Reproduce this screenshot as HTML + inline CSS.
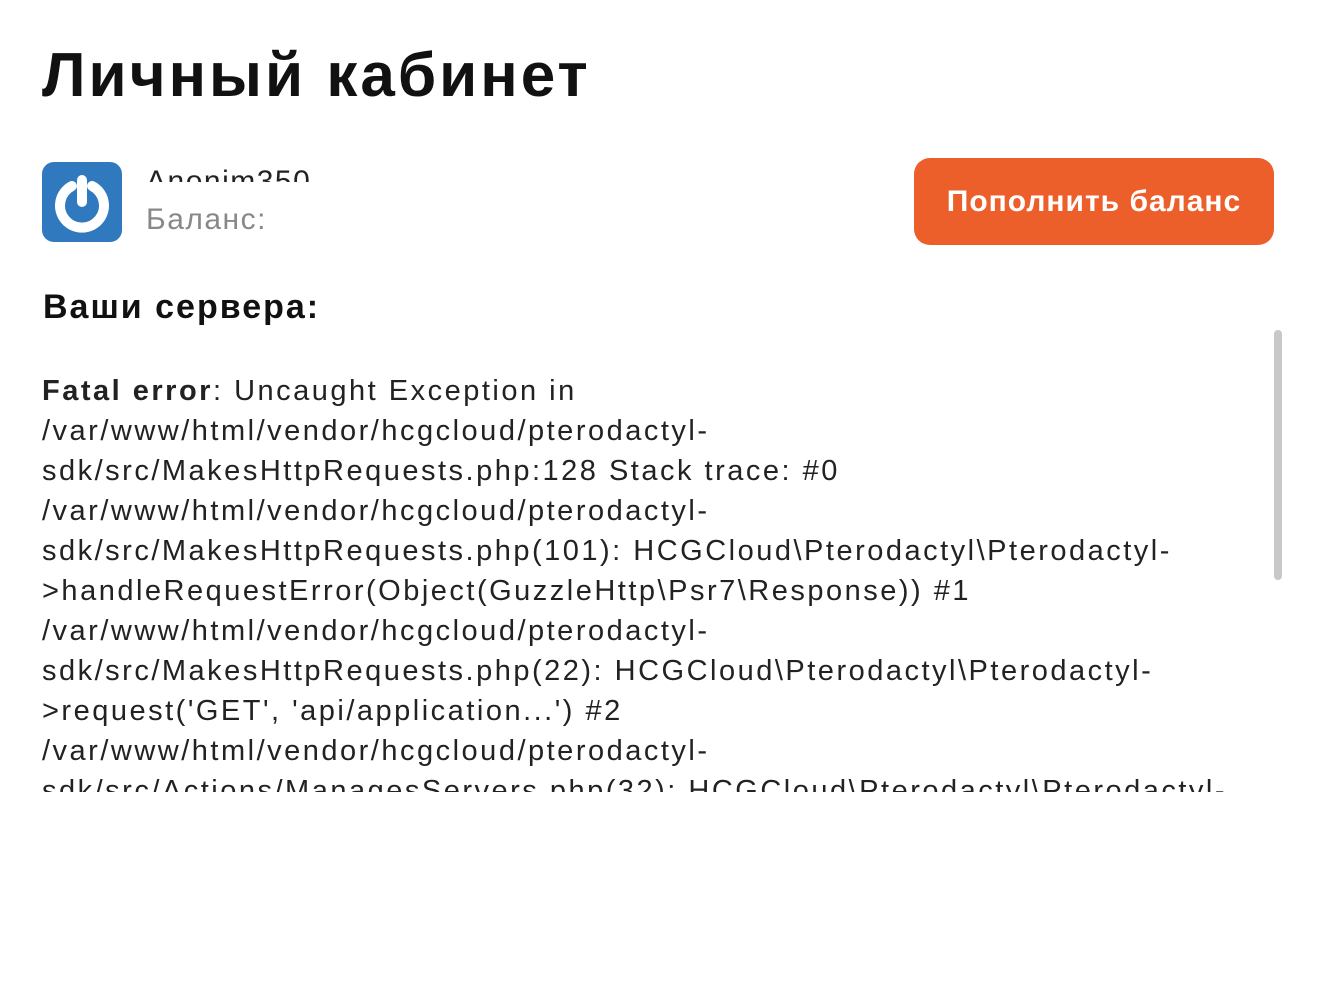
<!DOCTYPE html>
<html><head><meta charset="utf-8"><style>
body{margin:0;width:1322px;height:988px;background:#fff;font-family:"Liberation Sans",sans-serif;color:#111;position:relative;overflow:hidden}
h1{position:absolute;left:42px;top:40px;margin:0;font-size:62px;font-weight:bold;letter-spacing:3px}
.av{position:absolute;left:42px;top:162px;width:80px;height:80px;background:#3079bf;border-radius:12px}
.name{position:absolute;left:146px;top:160px;font-size:30px;color:#222;height:22px;overflow:hidden;line-height:44px;letter-spacing:1.5px}
.bal{position:absolute;left:146px;top:203px;font-size:30px;color:#888;letter-spacing:1.5px}
.btn{position:absolute;left:914px;top:158px;width:360px;height:87px;background:#ec5f2b;border-radius:16px;color:#fff;font-weight:bold;font-size:30px;text-align:center;line-height:87px;letter-spacing:1px}
h2{position:absolute;left:43px;top:288px;margin:0;font-size:34px;font-weight:bold;letter-spacing:2px}
.err{position:absolute;left:42px;top:371px;width:1220px;height:421px;overflow:hidden;font-size:29px;line-height:40px;color:#222;white-space:nowrap;letter-spacing:2.5px}
.sb{position:absolute;left:1274px;top:330px;width:8px;height:250px;background:#c8c8c8;border-radius:4px}
</style></head><body>
<h1>Личный кабинет</h1>
<div class="av"><svg width="80" height="80" viewBox="0 0 80 80"><path d="M30 24 A22 22 0 1 0 50 24" fill="none" stroke="#fff" stroke-width="10" stroke-linecap="round"/><line x1="40" y1="18" x2="40" y2="40" stroke="#fff" stroke-width="10" stroke-linecap="round"/></svg></div>
<div class="name">Anonim350</div>
<div class="bal">Баланс:</div>
<div class="btn">Пополнить баланс</div>
<h2>Ваши сервера:</h2>
<div class="err"><b>Fatal error</b>: Uncaught Exception in<br>/var/www/html/vendor/hcgcloud/pterodactyl-<br>sdk/src/MakesHttpRequests.php:128 Stack trace: #0<br>/var/www/html/vendor/hcgcloud/pterodactyl-<br>sdk/src/MakesHttpRequests.php(101): HCGCloud\Pterodactyl\Pterodactyl-<br>&gt;handleRequestError(Object(GuzzleHttp\Psr7\Response)) #1<br>/var/www/html/vendor/hcgcloud/pterodactyl-<br>sdk/src/MakesHttpRequests.php(22): HCGCloud\Pterodactyl\Pterodactyl-<br>&gt;request('GET', 'api/application...') #2<br>/var/www/html/vendor/hcgcloud/pterodactyl-<br>sdk/src/Actions/ManagesServers.php(32): HCGCloud\Pterodactyl\Pterodactyl-</div>
<div class="sb"></div>
</body></html>
